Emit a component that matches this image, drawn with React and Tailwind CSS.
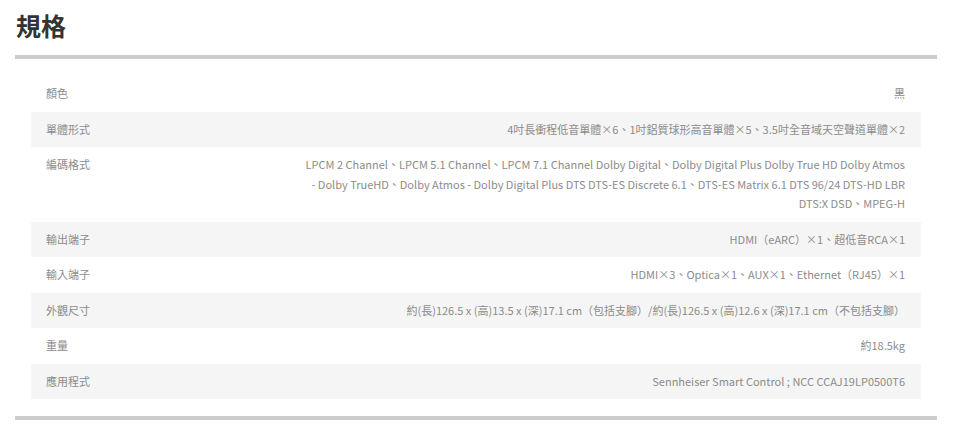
const SPECS = [
  { label: '顏色', value: ['黑'] },
  { label: '單體形式', value: ['4吋長衝程低音單體×6、1吋鋁質球形高音單體×5、3.5吋全音域天空聲道單體×2'] },
  {
    label: '編碼格式',
    value: [
      'LPCM 2 Channel、LPCM 5.1 Channel、LPCM 7.1 Channel Dolby Digital、Dolby Digital Plus Dolby True HD Dolby Atmos',
      '- Dolby TrueHD、Dolby Atmos - Dolby Digital Plus DTS DTS-ES Discrete 6.1、DTS-ES Matrix 6.1 DTS 96/24 DTS-HD LBR',
      'DTS:X DSD、MPEG-H',
    ],
  },
  { label: '輸出端子', value: ['HDMI（eARC）×1、超低音RCA×1'] },
  { label: '輸入端子', value: ['HDMI×3、Optica×1、AUX×1、Ethernet（RJ45）×1'] },
  {
    label: '外觀尺寸',
    value: ['約(長)126.5 x (高)13.5 x (深)17.1 cm（包括支腳）/約(長)126.5 x (高)12.6 x (深)17.1 cm（不包括支腳）'],
  },
  { label: '重量', value: ['約18.5kg'] },
  { label: '應用程式', value: ['Sennheiser Smart Control ; NCC CCAJ19LP0500T6'] },
]

export default function App() {
  return (
    <div
      className="w-[960px] h-[431px] bg-white pl-[15px] pt-[7px]"
      style={{ fontFamily: '"Noto Sans CJK TC", "Noto Sans", sans-serif' }}
    >
      <div className="w-[922px]">
        <h1 className="h-[36px] pl-[1px] text-[25px] leading-[36px] font-bold text-[#333]">規格</h1>

        <div className="mt-[12px] h-[4px] bg-[#cccccc]" />

        <div className="mx-[16px] my-[17px]">
          {SPECS.map((row, i) => (
            <div
              key={row.label}
              className={`flex justify-between py-2 pl-[15px] pr-[16px] text-[11px] leading-[19.5px] text-[#8c8c8c] ${
                i % 2 === 1 ? 'bg-[#f5f5f5]' : 'bg-white'
              }`}
            >
              <span className="shrink-0">{row.label}</span>
              <div className="text-right">
                {row.value.map((line) => (
                  <div key={line}>{line}</div>
                ))}
              </div>
            </div>
          ))}
        </div>

        <div className="h-[4px] bg-[#cccccc]" />
      </div>
    </div>
  )
}
